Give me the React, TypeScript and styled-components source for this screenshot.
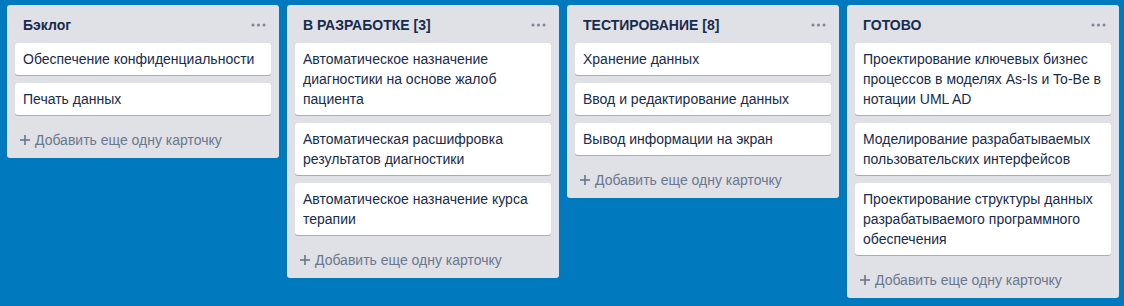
import React from 'react'
import styled, { createGlobalStyle } from 'styled-components'

const GlobalStyle = createGlobalStyle`
  html, body {
    margin: 0;
    padding: 0;
    background: #0079bf;
    font-family: "Liberation Sans", Arial, sans-serif;
  }
`

const Board = styled.div`
  display: flex;
  align-items: flex-start;
  gap: 8px;
  padding: 5px 7px;
  min-height: 306px;
  box-sizing: border-box;
`

const List = styled.section`
  width: 272px;
  flex: none;
  background: #dfe1e6;
  border-radius: 3px;
  box-sizing: border-box;
  padding: 0 8px;
  display: flex;
  flex-direction: column;
`

const ListHeader = styled.header`
  display: flex;
  align-items: center;
  justify-content: space-between;
  padding: 10px 5px 8px 8px;
`

const ListTitle = styled.h2`
  margin: 0;
  font-size: 14px;
  line-height: 20px;
  font-weight: 700;
  color: #172b4d;
`

const MenuDots = styled.svg`
  display: block;
  width: 15px;
  height: 4px;
`

const Card = styled.div`
  background: #fff;
  border-radius: 3px;
  box-shadow: 0 1px 0 #a5adba;
  padding: 6px 8px;
  margin-bottom: 8px;
  font-size: 14px;
  line-height: 20px;
  color: #172b4d;
`

const AddCard = styled.div`
  display: flex;
  align-items: center;
  gap: 5px;
  padding: 7px 4px 8px 5px;
  font-size: 14px;
  line-height: 20px;
  color: #6b778c;
`

const PlusIcon = styled.svg`
  display: block;
  width: 10px;
  height: 10px;
  flex: none;
`

type ListData = { title: string; cards: string[] }

const lists: ListData[] = [
  {
    title: 'Бэклог',
    cards: ['Обеспечение конфиденциальности', 'Печать данных'],
  },
  {
    title: 'В РАЗРАБОТКЕ [3]',
    cards: [
      'Автоматическое назначение диагностики на основе жалоб пациента',
      'Автоматическая расшифровка результатов диагностики',
      'Автоматическое назначение курса терапии',
    ],
  },
  {
    title: 'ТЕСТИРОВАНИЕ [8]',
    cards: [
      'Хранение данных',
      'Ввод и редактирование данных',
      'Вывод информации на экран',
    ],
  },
  {
    title: 'ГОТОВО',
    cards: [
      'Проектирование ключевых бизнес процессов в моделях As-Is и To-Be в нотации UML AD',
      'Моделирование разрабатываемых пользовательских интерфейсов',
      'Проектирование структуры данных разрабатываемого программного обеспечения',
    ],
  },
]

export default function App() {
  return (
    <>
      <GlobalStyle />
      <Board>
        {lists.map((list) => (
          <List key={list.title}>
            <ListHeader>
              <ListTitle>{list.title}</ListTitle>
              <MenuDots viewBox='0 0 15 4'>
                <circle cx='2' cy='2' r='1.5' fill='#7a869a' />
                <circle cx='7.5' cy='2' r='1.5' fill='#7a869a' />
                <circle cx='13' cy='2' r='1.5' fill='#7a869a' />
              </MenuDots>
            </ListHeader>
            {list.cards.map((c) => (
              <Card key={c}>{c}</Card>
            ))}
            <AddCard>
              <PlusIcon viewBox='0 0 10 10'>
                <rect x='4.2' y='0' width='1.6' height='10' fill='#6b778c' />
                <rect x='0' y='4.2' width='10' height='1.6' fill='#6b778c' />
              </PlusIcon>
              Добавить еще одну карточку
            </AddCard>
          </List>
        ))}
      </Board>
    </>
  )
}
